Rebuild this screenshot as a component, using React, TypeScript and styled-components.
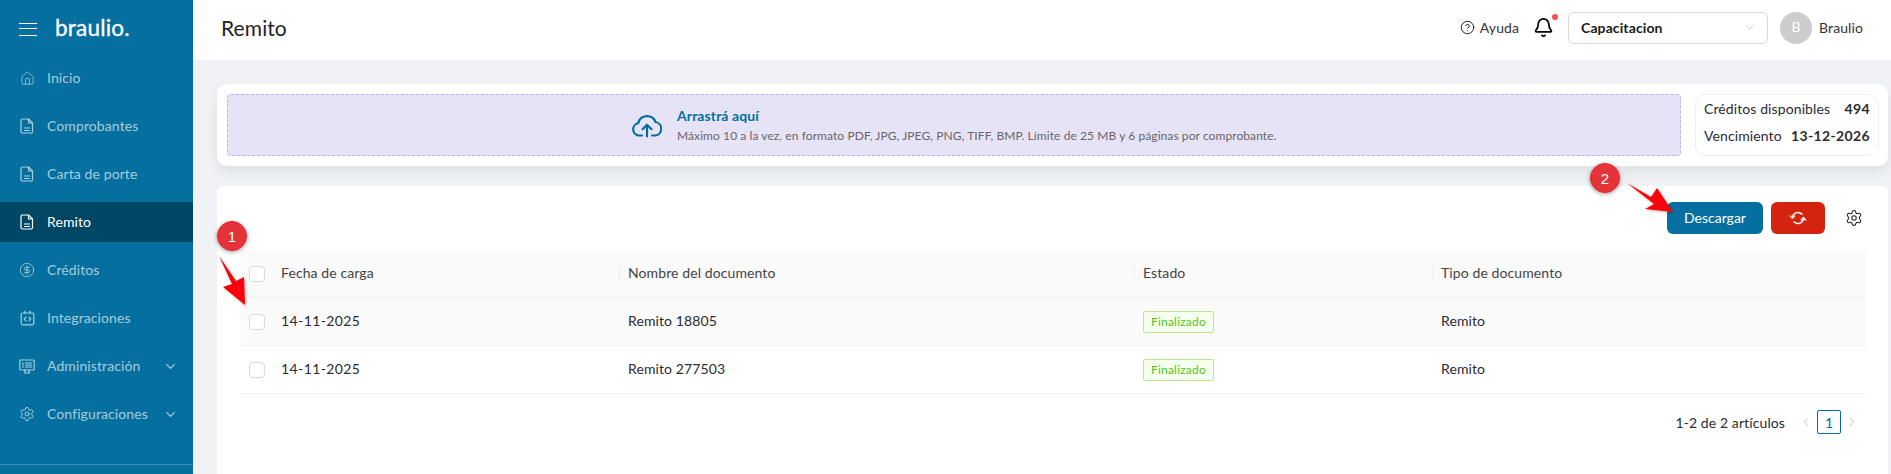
import React from "react";
import styled, { createGlobalStyle } from "styled-components";
import { House, ChevronDown, ChevronLeft, ChevronRight, CircleHelp, Bell, Settings, CircleDollarSign } from "lucide-react";

const Global = createGlobalStyle`
  html, body { margin: 0; padding: 0; height: 100%; background: #f0f2f5; }
  body { font-family: "Lato", "Noto Sans", sans-serif; color: #2b2b33; overflow: hidden; letter-spacing: 0.1px; }
  #root { height: 474px; }
  * { box-sizing: border-box; }
`;

const Shell = styled.div`
  position: relative;
  display: flex;
  width: 1891px;
  height: 474px;
  overflow: hidden;
`;

const Sidebar = styled.aside`
  width: 193px;
  flex: none;
  background: #05709f;
  display: flex;
  flex-direction: column;
`;

const Brand = styled.div`
  height: 58px;
  display: flex;
  align-items: center;
  gap: 18px;
  padding-left: 19px;
`;

const Burger = styled.div`
  width: 18px;
  height: 13px;
  border-top: 1.5px solid #fff;
  border-bottom: 1.5px solid #fff;
  position: relative;
  &::after {
    content: "";
    position: absolute;
    left: 0;
    right: 0;
    top: 4.25px;
    height: 1.5px;
    background: #fff;
  }
`;

const Logo = styled.span`
  color: #fff;
  font-family: "Lato", sans-serif;
  font-size: 22.5px;
  line-height: 24px;
  letter-spacing: 0.2px;
  font-weight: 400;
  margin-top: -2px;
  -webkit-text-stroke: 0.3px #fff;
`;

const Menu = styled.nav`
  display: flex;
  flex-direction: column;
  gap: 8px;
  flex: 1;
`;

const MenuItem = styled.div<{ $active?: boolean }>`
  height: 40px;
  display: flex;
  align-items: center;
  padding-left: 20px;
  gap: 13px;
  font-size: 14px;
  color: ${(p) => (p.$active ? "#fff" : "rgba(255,255,255,0.65)")};
  background: ${(p) => (p.$active ? "#004766" : "transparent")};
`;

const IconSlot = styled.span`
  width: 14px;
  height: 16px;
  flex: none;
  display: flex;
  align-items: center;
  justify-content: center;
  svg { flex: none; }
`;

const MenuLabel = styled.span`
  flex: 1;
  padding-bottom: 2px;
`;

const Caret = styled.span`
  display: flex;
  margin-right: 15px;
`;

const SideFoot = styled.div`
  height: 10px;
  border-top: 1px solid rgba(255, 255, 255, 0.22);
`;

const Content = styled.div`
  flex: 1;
  min-width: 0;
  display: flex;
  flex-direction: column;
`;

const Topbar = styled.header`
  height: 60px;
  flex: none;
  background: #fff;
  display: flex;
  align-items: center;
  padding: 0 28px 4px 28px;
`;

const Title = styled.h1`
  margin: 0 0 2px;
  font-size: 21px;
  font-weight: 400;
  flex: 1;
  color: #1f1f26;
`;

const Help = styled.div`
  display: flex;
  align-items: center;
  gap: 5px;
  font-size: 14px;
  color: #333;
  margin: 0 14px 2px 0;
`;

const BellWrap = styled.div`
  position: relative;
  display: flex;
  margin: -2px 14px 0 0;
  &::after {
    content: "";
    position: absolute;
    right: -4px;
    top: -3px;
    width: 6px;
    height: 6px;
    border-radius: 50%;
    background: #ff4d4f;
  }
`;

const SelectBox = styled.div`
  width: 200px;
  height: 32px;
  border: 1px solid #d9d9d9;
  border-radius: 6px;
  display: flex;
  align-items: center;
  justify-content: space-between;
  padding: 0 10px 2px 12px;
  font-size: 14px;
  font-weight: 700;
  color: #1a1a1a;
  margin-right: 12px;
`;

const Avatar = styled.div`
  width: 32px;
  height: 32px;
  border-radius: 50%;
  background: #ccc;
  color: #fff;
  display: flex;
  align-items: center;
  justify-content: center;
  font-size: 14px;
  padding-bottom: 4px;
  margin-right: 7px;
`;

const UserName = styled.span`
  font-size: 14px;
  color: #333;
  margin-bottom: 2px;
`;

const Main = styled.main`
  flex: 1;
  min-height: 0;
  display: flex;
  flex-direction: column;
  gap: 20px;
  padding: 24px 3px 0 24px;
`;

const UploadCard = styled.section`
  height: 82px;
  flex: none;
  background: #fff;
  border-radius: 10px;
  padding: 10px 9px 10px 10px;
  display: flex;
  gap: 14px;
  box-shadow: 0 6px 14px rgba(0, 0, 0, 0.08);
`;

const DropZone = styled.div`
  flex: 1;
  background: #e6e3f7;
  border: 1px dashed #bfaef5;
  border-radius: 4px;
  display: flex;
  align-items: center;
  padding-left: 404px;
  gap: 15px;
`;

const DropText = styled.div`
  display: flex;
  flex-direction: column;
  gap: 4px;
`;

const DropTitle = styled.div`
  font-size: 14px;
  font-weight: 700;
  color: #05709f;
`;

const DropHint = styled.div`
  font-size: 12px;
  color: #666;
  letter-spacing: 0.08px;
`;

const Credits = styled.div`
  width: 184px;
  flex: none;
  border: 1px solid #efefef;
  border-radius: 10px;
  padding: 4px 8px 0 8px;
  display: flex;
  flex-direction: column;
  gap: 7px;
  font-size: 14px;
`;

const CreditRow = styled.div`
  display: flex;
  justify-content: space-between;
  line-height: 20px;
  b { font-weight: 700; letter-spacing: 0.35px; }
`;

const TableCard = styled.section`
  flex: 1;
  background: #fff;
  border-radius: 6px 6px 0 0;
  padding: 16px 22px 0 24px;
  display: flex;
  flex-direction: column;
`;

const Toolbar = styled.div`
  display: flex;
  justify-content: flex-end;
  align-items: center;
  gap: 8px;
  height: 32px;
  margin-bottom: 16px;
`;

const PrimaryButton = styled.button`
  width: 96px;
  height: 32px;
  border: 0;
  border-radius: 6px;
  background: #05709f;
  color: #fff;
  font: inherit;
  font-size: 14px;
  padding: 0 0 2px;
`;

const SyncButton = styled.button`
  width: 54px;
  height: 32px;
  border: 0;
  border-radius: 6px;
  background: #d4230f;
  display: flex;
  align-items: center;
  justify-content: center;
  padding: 0;
`;

const GearButton = styled.span`
  display: flex;
  margin: 0 3px 0 12px;
`;

const Row = styled.div<{ $shade?: boolean }>`
  display: grid;
  grid-template-columns: 32px 346px 515px 298px 1fr;
  height: 48px;
  align-items: center;
  background: ${(p) => (p.$shade ? "#fafafa" : "#fff")};
  border-bottom: 1px solid #f0f0f0;
  font-size: 14px;
`;

const CheckCell = styled.div`
  display: flex;
  justify-content: flex-end;
  padding-right: 8px;
`;

const Check = styled.span`
  width: 16px;
  height: 16px;
  background: #fff;
  border: 1px solid #d9d9d9;
  border-radius: 4px;
`;

const Cell = styled.div<{ $head?: boolean }>`
  position: relative;
  padding-left: 9px;
  padding-bottom: 2px;
  color: ${(p) => (p.$head ? "#444" : "#2b2b33")};
  &::before {
    content: ${(p) => (p.$head ? '""' : "none")};
    position: absolute;
    left: 0;
    top: 2px;
    bottom: 2px;
    width: 1px;
    background: #f0f0f0;
  }
`;

const DateCell = styled(Cell)`
  padding-left: 8px;
  letter-spacing: 0.4px;
  &::before { content: none; }
`;

const HeadDate = styled(Cell)`
  padding-left: 8px;
  &::before { content: none; }
`;

const TagCell = styled.div`
  padding-left: 9px;
  display: flex;
`;

const Tag = styled.span`
  display: inline-block;
  height: 22px;
  line-height: 20px;
  padding: 0 7px;
  font-size: 12px;
  letter-spacing: 0.2px;
  color: #52c41a;
  background: #f6ffed;
  border: 1px solid #b7eb8f;
  border-radius: 2px;
`;

const Pager = styled.div`
  display: flex;
  justify-content: flex-end;
  align-items: center;
  height: 24px;
  margin: 16px 7px 0 0;
  font-size: 14px;
  color: #2b2b33;
`;

const PagerText = styled.span`
  margin-right: 14px;
`;

const PageBox = styled.span`
  width: 24px;
  height: 24px;
  border: 1px solid #05709f;
  border-radius: 2px;
  color: #05709f;
  display: flex;
  align-items: center;
  justify-content: center;
  margin: 0 4px;
`;

const Overlay = styled.svg`
  position: absolute;
  left: 0;
  top: 0;
  pointer-events: none;
`;

const Badge = styled.span<{ $x: number; $y: number }>`
  position: absolute;
  left: ${(p) => p.$x - 15}px;
  top: ${(p) => p.$y - 15}px;
  width: 30px;
  height: 30px;
  border-radius: 50%;
  background: #e5333a;
  border: 1px solid #f0232a;
  box-shadow: 0 1px 4px rgba(0, 0, 0, 0.4);
  color: #fff;
  font-family: "Liberation Sans", sans-serif;
  font-size: 15px;
  display: flex;
  align-items: center;
  justify-content: center;
`;

const DocIcon = ({ color = "currentColor" }: { color?: string }) => (
  <svg width="14" height="16" viewBox="0 0 14 16" fill="none" stroke={color} strokeWidth="1.2" strokeLinejoin="round">
    <path d="M2.5 1h6l4 4v8.5a1.5 1.5 0 0 1-1.5 1.5H2.5A1.5 1.5 0 0 1 1 13.5v-11A1.5 1.5 0 0 1 2.5 1z" />
    <path d="M8.5 1v4h4M4 10h6M4 12.5h6" />
  </svg>
);

const IntegrationIcon = () => (
  <svg width="15" height="16" viewBox="0 0 15 16" fill="none" stroke="currentColor" strokeWidth="1.2" strokeLinejoin="round" strokeLinecap="round">
    <rect x="1.2" y="3" width="12.6" height="11.8" rx="1.5" />
    <path d="M5 3V1M10 3V1M6 7.2 4.3 9 6 10.8M9 7.2l1.7 1.8L9 10.8" />
  </svg>
);

const MonitorIcon = () => (
  <svg width="16" height="15" viewBox="0 0 16 15" fill="none" stroke="currentColor" strokeWidth="1.2" strokeLinecap="round" strokeLinejoin="round">
    <rect x="0.8" y="1" width="14.4" height="10" rx="1" />
    <path d="M5.5 14h5M6 11v3M10 11v3M3.5 4h1M3.5 6h1M3.5 8h1M6.5 4h6M6.5 6h6M6.5 8h6" />
  </svg>
);

const SyncIcon = () => (
  <svg width="18" height="16" viewBox="0 0 18 16" fill="none" strokeWidth="1.5" strokeLinecap="round" strokeLinejoin="round">
    <path d="M3.5 8A5.5 5.5 0 0 1 13 4.2" stroke="#fff" />
    <path d="M14.5 8A5.5 5.5 0 0 1 5 11.8" stroke="#fff" />
    <path d="M1.3 6 3.5 8.3 5.7 6" stroke="#ffd9a0" />
    <path d="M12.3 10 14.5 7.7 16.7 10" stroke="#fff" />
  </svg>
);

const CloudIcon = () => (
  <svg width="30" height="25" viewBox="0 0 30 25" fill="none" stroke="#05709f" strokeWidth="2.2" strokeLinecap="round" strokeLinejoin="round">
    <path d="M10 22.5H7.5a6.2 6.2 0 0 1-1.2-12.3A9 9 0 0 1 23.5 9a6.8 6.8 0 0 1-.5 13.5h-3" />
    <path d="M15 23.5V12M10.5 16.2 15 11.7l4.5 4.5" />
  </svg>
);

const nav: { label: string; icon: React.ReactNode; active?: boolean; caret?: boolean }[] = [
  { label: "Inicio", icon: <House size={15} strokeWidth={1.2} /> },
  { label: "Comprobantes", icon: <DocIcon /> },
  { label: "Carta de porte", icon: <DocIcon /> },
  { label: "Remito", icon: <DocIcon />, active: true },
  { label: "Créditos", icon: <CircleDollarSign size={16} strokeWidth={1.2} /> },
  { label: "Integraciones", icon: <IntegrationIcon /> },
  { label: "Administración", icon: <MonitorIcon />, caret: true },
  { label: "Configuraciones", icon: <Settings size={16} strokeWidth={1.4} />, caret: true },
];

const docs = ["Remito 18805", "Remito 277503"];

export default function App() {
  return (
    <Shell>
      <Global />
      <Sidebar>
        <Brand>
          <Burger />
          <Logo>braulio.</Logo>
        </Brand>
        <Menu>
          {nav.map((n) => (
            <MenuItem key={n.label} $active={n.active}>
              <IconSlot>{n.icon}</IconSlot>
              <MenuLabel>{n.label}</MenuLabel>
              {n.caret && (
                <Caret>
                  <ChevronDown size={15} strokeWidth={2} />
                </Caret>
              )}
            </MenuItem>
          ))}
        </Menu>
        <SideFoot />
      </Sidebar>
      <Content>
        <Topbar>
          <Title>Remito</Title>
          <Help>
            <CircleHelp size={15} strokeWidth={1.6} color="#222" />
            Ayuda
          </Help>
          <BellWrap>
            <Bell size={21} strokeWidth={2} color="#000" />
          </BellWrap>
          <SelectBox>
            Capacitacion
            <ChevronDown size={15} strokeWidth={1} color="#aaa" />
          </SelectBox>
          <Avatar>B</Avatar>
          <UserName>Braulio</UserName>
        </Topbar>
        <Main>
          <UploadCard>
            <DropZone>
              <CloudIcon />
              <DropText>
                <DropTitle>Arrastrá aquí</DropTitle>
                <DropHint>Máximo 10 a la vez, en formato PDF, JPG, JPEG, PNG, TIFF, BMP. Límite de 25 MB y 6 páginas por comprobante.</DropHint>
              </DropText>
            </DropZone>
            <Credits>
              <CreditRow>
                <span>Créditos disponibles</span>
                <b>494</b>
              </CreditRow>
              <CreditRow>
                <span>Vencimiento</span>
                <b>13-12-2026</b>
              </CreditRow>
            </Credits>
          </UploadCard>
          <TableCard>
            <Toolbar>
              <PrimaryButton>Descargar</PrimaryButton>
              <SyncButton>
                <SyncIcon />
              </SyncButton>
              <GearButton>
                <Settings size={18} strokeWidth={1.4} color="#222" />
              </GearButton>
            </Toolbar>
            <Row $shade>
              <CheckCell>
                <Check />
              </CheckCell>
              <HeadDate $head>Fecha de carga</HeadDate>
              <Cell $head>Nombre del documento</Cell>
              <Cell $head>Estado</Cell>
              <Cell $head>Tipo de documento</Cell>
            </Row>
            {docs.map((d, i) => (
              <Row key={d} $shade={i === 0}>
                <CheckCell>
                  <Check />
                </CheckCell>
                <DateCell>14-11-2025</DateCell>
                <Cell>{d}</Cell>
                <TagCell>
                  <Tag>Finalizado</Tag>
                </TagCell>
                <Cell>Remito</Cell>
              </Row>
            ))}
            <Pager>
              <PagerText>1-2 de 2 artículos</PagerText>
              <ChevronLeft size={14} strokeWidth={1.2} color="#aaa" />
              <PageBox>1</PageBox>
              <ChevronRight size={14} strokeWidth={1.2} color="#aaa" />
            </Pager>
          </TableCard>
        </Main>
      </Content>
      <Overlay width="1891" height="474" viewBox="0 0 1891 474">
        <defs>
          <filter id="s" x="-30%" y="-30%" width="160%" height="160%">
            <feDropShadow dx="1" dy="1" stdDeviation="1.5" floodColor="#000" floodOpacity="0.3" />
          </filter>
        </defs>
        <polygon filter="url(#s)" fill="#fb0007" points="219,256 236,281 244,277 245,305 223,287 232,284" />
        <polygon filter="url(#s)" fill="#fb0007" points="1627,183 1651,197 1657,188 1673,212 1645,209 1654,204" />
      </Overlay>
      <Badge $x={232} $y={236}>1</Badge>
      <Badge $x={1605} $y={178}>2</Badge>
    </Shell>
  );
}
